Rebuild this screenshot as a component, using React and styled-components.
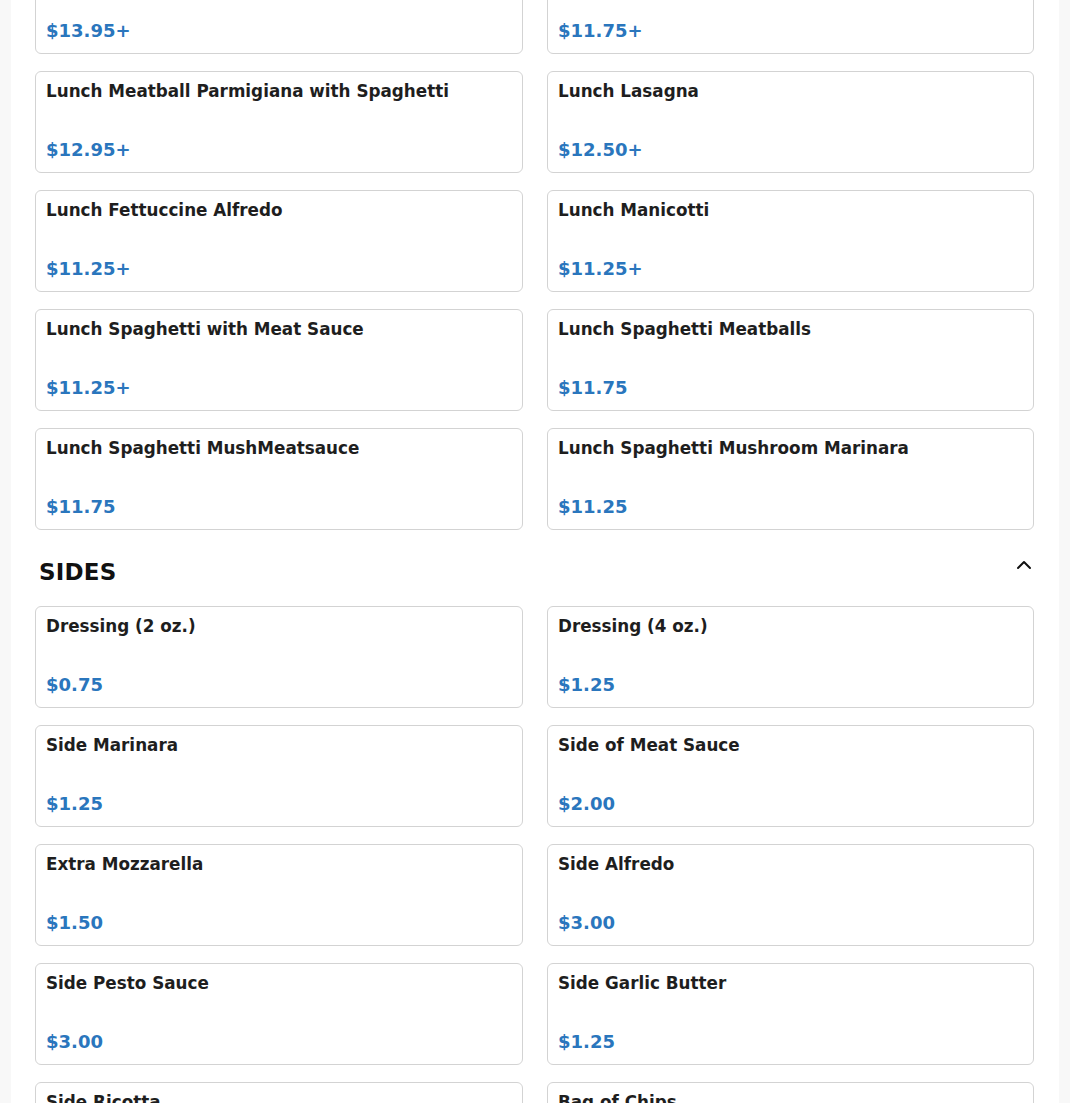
import React from "react";
import styled, { createGlobalStyle } from "styled-components";

const GlobalStyle = createGlobalStyle`
  body {
    margin: 0;
    background: #f8f8f8;
    font-family: "DejaVu Sans", "Liberation Sans", sans-serif;
  }
`;

const Page = styled.main`
  width: 1048px;
  margin: -48px auto 0;
  padding: 0 25px 40px 24px;
  box-sizing: border-box;
  background: #ffffff;
`;

const Section = styled.section`
  display: flex;
  flex-direction: column;
`;

const SectionHeader = styled.div`
  display: flex;
  justify-content: space-between;
  align-items: flex-start;
  height: 40px;
  margin: 22px 0 14px;
  padding: 0 0 0 4px;
`;

const SectionTitle = styled.h2`
  margin: 0;
  font-size: 23px;
  line-height: 40px;
  font-weight: 700;
  color: #111111;
  letter-spacing: 0.2px;
`;

const Toggle = styled.button`
  display: flex;
  align-items: center;
  justify-content: center;
  width: 24px;
  height: 24px;
  margin: 1px -2px 0 0;
  padding: 0;
  border: none;
  background: none;
  color: #111111;
  cursor: pointer;
`;

const Grid = styled.div`
  display: grid;
  grid-template-columns: 488px 487px;
  column-gap: 24px;
  row-gap: 17px;
`;

const Card = styled.article`
  display: flex;
  flex-direction: column;
  justify-content: space-between;
  height: 102px;
  box-sizing: border-box;
  padding: 9px 10px 12px;
  border: 1px solid #d3d3d3;
  border-radius: 6px;
  background: #ffffff;
  cursor: pointer;
`;

const ItemName = styled.h3`
  margin: 0;
  font-size: 16.8px;
  line-height: 20px;
  font-weight: 700;
  color: #1e1e1e;
`;

const Price = styled.div`
  font-size: 18px;
  line-height: 20px;
  font-weight: 700;
  color: #2a76bd;
`;

const ChevronUp = () => (
  <svg width="24" height="24" viewBox="0 0 24 24" fill="none" stroke="currentColor" strokeWidth="2" strokeLinecap="round" strokeLinejoin="round">
    <path d="m18 15-6-6-6 6" />
  </svg>
);

const lunch = [
  ["Lunch Chicken Parmigiana", "$13.95+"],
  ["Lunch Baked Ziti", "$11.75+"],
  ["Lunch Meatball Parmigiana with Spaghetti", "$12.95+"],
  ["Lunch Lasagna", "$12.50+"],
  ["Lunch Fettuccine Alfredo", "$11.25+"],
  ["Lunch Manicotti", "$11.25+"],
  ["Lunch Spaghetti with Meat Sauce", "$11.25+"],
  ["Lunch Spaghetti Meatballs", "$11.75"],
  ["Lunch Spaghetti MushMeatsauce", "$11.75"],
  ["Lunch Spaghetti Mushroom Marinara", "$11.25"],
];

const sides = [
  ["Dressing (2 oz.)", "$0.75"],
  ["Dressing (4 oz.)", "$1.25"],
  ["Side Marinara", "$1.25"],
  ["Side of Meat Sauce", "$2.00"],
  ["Extra Mozzarella", "$1.50"],
  ["Side Alfredo", "$3.00"],
  ["Side Pesto Sauce", "$3.00"],
  ["Side Garlic Butter", "$1.25"],
  ["Side Ricotta", "$2.00"],
  ["Bag of Chips", "$1.50"],
];

function ItemGrid({ items }) {
  return (
    <Grid>
      {items.map(([name, price]) => (
        <Card key={name}>
          <ItemName>{name}</ItemName>
          <Price>{price}</Price>
        </Card>
      ))}
    </Grid>
  );
}

export default function App() {
  return (
    <>
      <GlobalStyle />
      <Page>
        <Section>
          <ItemGrid items={lunch} />
        </Section>
        <Section>
          <SectionHeader>
            <SectionTitle>SIDES</SectionTitle>
            <Toggle aria-label="Collapse section">
              <ChevronUp />
            </Toggle>
          </SectionHeader>
          <ItemGrid items={sides} />
        </Section>
      </Page>
    </>
  );
}
